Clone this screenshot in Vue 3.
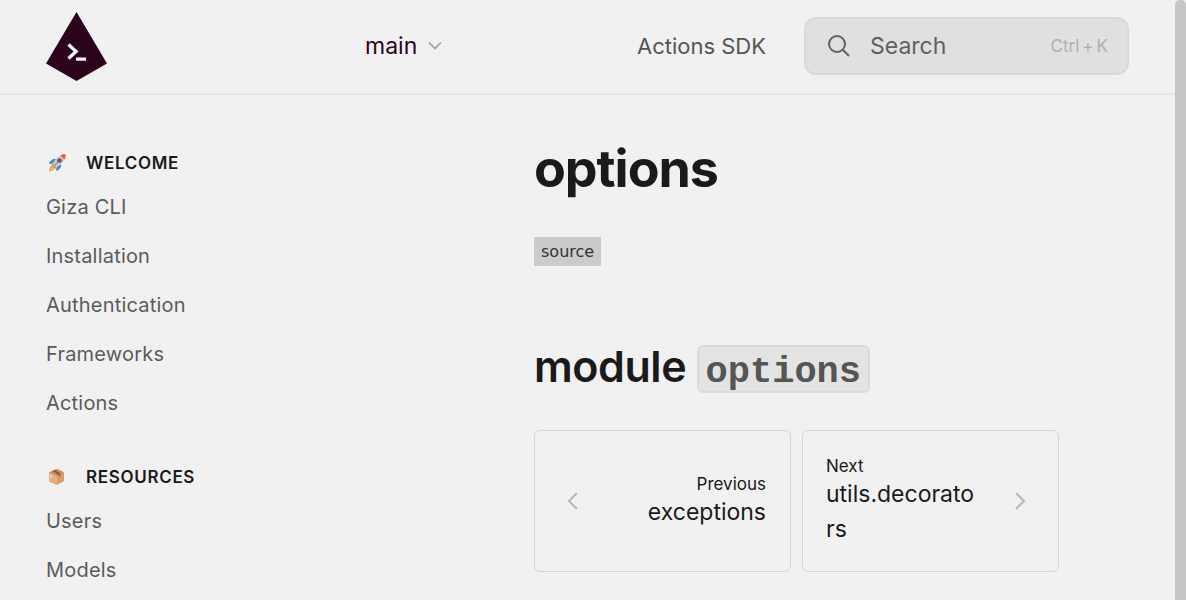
<script setup>
const groups = [
  { icon: 'rocket', title: 'WELCOME', links: ['Giza CLI', 'Installation', 'Authentication', 'Frameworks', 'Actions'] },
  { icon: 'package', title: 'RESOURCES', links: ['Users', 'Models'] },
]
</script>

<template>
  <div class="window">
    <div class="page">
      <header class="header">
        <div class="brand">
          <a class="logo" href="#" aria-label="Giza home">
            <svg width="62" height="68" viewBox="0 0 62 68">
              <path d="M30.5 0 61 51.5 30.5 69 0 51.5Z" fill="#2b041c" />
              <path d="M22.5 32.5 30 39.5 22.5 46.5" fill="none" stroke="#f1f1f1" stroke-width="3.4" />
              <path d="M30 47.1H40" stroke="#f1f1f1" stroke-width="3.3" />
            </svg>
          </a>
        </div>
        <button class="variant" type="button">
          main
          <svg width="14" height="10" viewBox="0 0 14 10"><path d="M1 1.5 7 7.5 13 1.5" /></svg>
        </button>
        <a class="sdk" href="#">Actions SDK</a>
        <button class="search" type="button">
          <svg width="24" height="24" viewBox="0 0 24 24"><circle cx="10" cy="10" r="8" /><path d="M16 16 22 22" /></svg>
          <span class="search-label">Search</span>
          <span class="shortcut"><span>Ctrl</span><span>+</span><span>K</span></span>
        </button>
      </header>

      <div class="body">
        <nav class="sidebar">
          <section v-for="group in groups" :key="group.title" class="group">
            <h2 class="group-title">
              <svg v-if="group.icon === 'rocket'" class="emoji" width="18" height="18" viewBox="0 0 18 18">
                <path d="M8 5 5 5 1 8.5 2 10 6 9Z" fill="#2f8fd0" />
                <path d="M13 10 13 13 9.5 17 8 16 9 12Z" fill="#2f8fd0" />
                <path d="M3 9.5 7 12 8.5 15 5 13Z" fill="#2878b4" />
                <path d="M5 11 7 13 5.5 16 1 17.5 2 13Z" fill="#f59a32" />
                <path d="M4.5 13 5.5 14 2.5 16Z" fill="#ffe08a" />
                <path d="M4.5 10.5C7 5 10.5 2 14 1L17 4C16 8 12.5 11.5 7.5 13.5Z" fill="#c9cdd1" />
                <path d="M12.5 1.5C14.5 .3 16 .2 17.5 .5 17.8 2.3 17.5 4 16.5 5.5Z" fill="#ee5a30" />
                <circle cx="11.5" cy="6.5" r="2.3" fill="#734b40" />
                <circle cx="11.5" cy="6.5" r="1.1" fill="#426d91" />
                <path d="M6.5 11.5 10 8" stroke="#e46b46" stroke-width="1.3" />
              </svg>
              <svg v-else class="emoji" width="18" height="18" viewBox="0 0 18 18">
                <path d="M1 4.5 9 1 16 4.5V13L9 17 1 13.5Z" fill="#d89b69" />
                <path d="M1 4.5 9 1 16 4.5 9 8Z" fill="#c78c5f" />
                <path d="M1 4.5 9 8V17L1 13.5Z" fill="#e5ae7d" />
                <path d="M4.5 3 6.5 2 13 6 11 7.2Z" fill="#83583e" />
                <path d="M11 7 13 6V8L11 9Z" fill="#a97149" />
                <path d="M2 7 4 8V10L2 9Z" fill="#f1e5da" />
              </svg>
              {{ group.title }}
            </h2>
            <a v-for="link in group.links" :key="link" class="nav-link" href="#">{{ link }}</a>
          </section>
        </nav>

        <main class="content">
          <h1 class="title">options</h1>
          <a class="source" href="#">source</a>
          <h2 class="module">module <code>options</code></h2>
          <div class="pager">
            <a class="card previous" href="#">
              <svg width="12" height="18" viewBox="0 0 12 18"><path d="M10 1 2 9 10 17" /></svg>
              <span class="card-text"><span class="hint">Previous</span><span class="name">exceptions</span></span>
            </a>
            <a class="card" href="#">
              <span class="card-text"><span class="hint">Next</span><span class="name">utils.decorators</span></span>
              <svg width="12" height="18" viewBox="0 0 12 18"><path d="M2 1 10 9 2 17" /></svg>
            </a>
          </div>
        </main>
      </div>
    </div>
    <div class="scrollbar"><div class="thumb"></div></div>
  </div>
</template>

<style>
body {
  margin: 0;
  background: #f1f1f1;
}
</style>

<style scoped>
.window {
  display: flex;
  height: 100vh;
  overflow: hidden;
  background: #f1f1f1;
  color: #1a1a1a;
  font-family: Inter, sans-serif;
}
.window * {
  box-sizing: border-box;
}
a {
  color: inherit;
  text-decoration: none;
}
button {
  font: inherit;
  cursor: pointer;
}
svg {
  flex: none;
  fill: none;
}
.page {
  flex: 1;
  min-width: 0;
}
.scrollbar {
  flex: none;
  width: 11px;
}
.thumb {
  height: 120%;
  border-radius: 5px;
  background: #c7c7c7;
}
.header {
  display: flex;
  align-items: center;
  padding: 12px 46px 13px;
  border-bottom: 2px solid #e5e5e5;
}
.brand {
  width: 319px;
}
.logo,
.logo svg {
  display: block;
  overflow: visible;
}
.variant {
  display: flex;
  align-items: center;
  gap: 11px;
  padding: 0;
  border: 0;
  background: none;
  color: #2b041c;
  font-size: 23px;
  line-height: 34px;
}
.variant svg {
  stroke: #a99ba5;
  stroke-width: 1.6;
}
.sdk {
  margin-left: auto;
  color: #555;
  font-size: 22px;
  line-height: 34px;
}
.search {
  display: flex;
  align-items: center;
  width: 325px;
  height: 58px;
  margin-left: 38px;
  padding: 0 19px 0 21px;
  border: 2px solid #d9d9d9;
  border-radius: 12px;
  background: #e0e0e0;
  color: #606060;
  text-align: left;
}
.search svg {
  stroke: #606060;
  stroke-width: 2;
}
.search-label {
  flex: 1;
  margin-left: 19px;
  font-size: 23px;
}
.shortcut {
  display: flex;
  gap: 3px;
  color: #b0b0b0;
  font-size: 17px;
}
.body {
  display: flex;
  padding: 0 116px 0 46px;
}
.sidebar {
  width: 488px;
  padding-top: 54px;
}
.group {
  margin-bottom: 35px;
}
.group-title {
  display: flex;
  align-items: center;
  height: 28px;
  margin: 0 0 6px;
  font-size: 17px;
  font-weight: 600;
  letter-spacing: 0.04em;
}
.emoji {
  margin: 0 20px 0 2px;
}
.nav-link {
  display: block;
  padding: 10px 0;
  color: #5b5b5b;
  font-size: 20px;
  line-height: 29px;
  letter-spacing: 0.01em;
}
.content {
  flex: 1;
  min-width: 0;
  padding-top: 41px;
}
.title {
  margin: 0 0 35px;
  font-size: 52px;
  font-weight: 700;
  line-height: 66px;
  letter-spacing: -0.02em;
}
.source {
  display: inline-block;
  padding: 0 7px;
  background: #cbcbcb;
  color: #333;
  font-family: "DejaVu Sans", sans-serif;
  font-size: 16px;
  line-height: 29px;
}
.module {
  margin: 69px 0 33px;
  font-size: 43px;
  font-weight: 600;
  line-height: 62px;
  letter-spacing: -0.01em;
}
.module code {
  display: inline-block;
  padding: 6px 7px 0;
  border: 2px solid #dadada;
  border-radius: 6px;
  background: #e3e3e3;
  color: #555;
  font-family: "Liberation Mono", monospace;
  font-size: 37px;
  font-weight: 700;
  line-height: 38px;
  letter-spacing: 0;
}
.pager {
  display: grid;
  grid-template-columns: 1fr 1fr;
  gap: 11px;
}
.card {
  display: flex;
  align-items: center;
  justify-content: space-between;
  min-height: 142px;
  padding: 18px 32px 18px 23px;
  border: 1px solid #d5d5d5;
  border-radius: 6px;
}
.previous {
  padding: 18px 24px 18px 32px;
  text-align: right;
}
.card svg {
  stroke: #b8b8b8;
  stroke-width: 2;
}
.card-text {
  max-width: 155px;
}
.hint,
.name {
  display: block;
}
.hint {
  font-size: 17px;
  line-height: 22px;
}
.name {
  font-size: 23px;
  line-height: 35px;
  overflow-wrap: anywhere;
}
</style>
